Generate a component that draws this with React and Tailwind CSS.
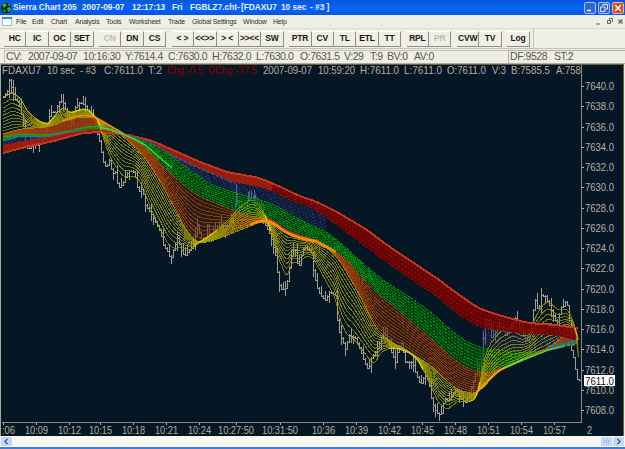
import clsx from 'clsx'

const FONT = "font-['Liberation_Sans',Arial,sans-serif]"

const toolGroups = [
  ['HC', 'IC', 'OC', 'SET'],
  ['CN', 'DN', 'CS'],
  ['< >', '<<>>', '> <', '>><<', 'SW'],
  ['PTR', 'CV', 'TL', 'ETL', 'TT'],
  ['RPL', 'PR'],
  ['CVW', 'TV'],
  ['Log'],
]
const disabledTools = ['CN', 'PR']

const menuItems = [
  ['File', 'w-4'],
  ['Edit', 'w-[19px]'],
  ['Chart', 'w-6'],
  ['Analysis', 'w-[31px]'],
  ['Tools', 'w-[23px]'],
  ['Worksheet', 'w-[39px]'],
  ['Trade', 'w-6'],
  ['Global Settings', 'w-[51px]'],
  ['Window', 'w-[30px]'],
  ['Help', 'w-5'],
]

const titleParts = [
  ['Sierra Chart 205', 'w-[69px]'],
  ['2007-09-07', 'w-[50px]'],
  ['12:17:13', 'w-10'],
  ['Fri', 'w-[18px]'],
  ['FGBLZ7.cht', 'w-[47px]'],
  ['-', 'w-1'],
  ['[FDAXU7', 'w-10'],
  ['10 sec', 'w-[29px]'],
  ['- #3 ]', 'w-6'],
]

const statusParts = [
  ['CV:', 'w-[22px]'],
  ['2007-09-07', 'w-[55px]'],
  ['10:16:30', 'w-[42px]'],
  ['Y:7614.4', 'w-[43px]'],
  ['C:7630.0', 'w-11'],
  ['H:7632.0', 'w-11'],
  ['L:7630.0', 'w-11'],
  ['O:7631.5', 'w-11'],
  ['V:29', 'w-[26px]'],
  ['T:9', 'w-[17px]'],
  ['BV:0', 'w-[27px]'],
  ['AV:0', 'w-[94px]'],
]

// [text, x, width, colour]
const quoteLine = [
  ['FDAXU7', 2, 39],
  ['10 sec', 47, 28],
  ['- #3', 80, 16],
  ['C:7611.0', 104, 39],
  ['T:2', 148, 14],
  ['Chg:-0.5', 167, 36, '#8c0000'],
  ['DChg:-37.5', 208, 49, '#8c0000'],
  ['2007-09-07', 263, 49],
  ['10:59:20', 318, 37],
  ['H:7611.0', 360, 39],
  ['L:7611.0', 404, 38],
  ['O:7611.0', 447, 39],
  ['V:3', 492, 14],
  ['B:7585.5', 511, 39],
]

// [label, tick x, text x, width]
const timeAxis = [
  [':06', 3, 2, 13],
  ['10:09', 36, 25, 23],
  ['10:12', 69, 58, 23],
  ['10:15', 100, 89, 23],
  ['10:18', 133, 122, 23],
  ['10:21', 166, 155, 23],
  ['10:24', 199, 188, 23],
  ['10:27:50', 236, 218, 36],
  ['10:31:50', 280, 262, 36],
  ['10:36', 323, 312, 23],
  ['10:39', 356, 345, 23],
  ['10:42', 389, 378, 23],
  ['10:45', 422, 411, 23],
  ['10:48', 455, 444, 23],
  ['10:51', 488, 477, 23],
  ['10:54', 521, 510, 23],
  ['10:57', 554, 543, 23],
]

const priceAxis = Array.from({ length: 17 }, (_, i) => 7640 - i * 2)

// Moving average envelopes, fast to slow, as x,y pairs
const FAST = [3,98,12,92,20,98,28,112,40,122,48,124,58,112,64,107,70,113,76,111,83,109,90,111,98,120,103,137,110,157,118,170,124,177,134,176,140,181,144,190,150,207,160,228,168,244,175,249,180,247,190,250,198,243,206,238,215,232,228,220,240,207,252,199,258,205,265,214,272,234,278,257,287,278,292,262,300,262,306,256,313,258,320,270,327,283,335,297,340,320,347,335,353,338,360,347,370,360,375,364,380,353,390,348,400,349,410,353,418,360,428,379,438,402,447,410,458,401,468,402,475,399,479,388,484,360,490,344,500,332,513,325,522,332,530,331,535,318,542,306,548,301,558,310,567,309,573,320,578,340]
const YELLOW = [3,134,20,129,48,127,65,121,80,117,95,117,110,127,125,138,140,152,150,165,160,181,175,209,188,233,198,243,210,241,220,238,240,230,260,222,273,224,287,234,313,242,330,250,340,261,350,278,360,296,373,323,380,333,393,343,407,350,420,359,432,366,442,377,458,390,475,394,485,386,495,374,502,369,515,363,530,355,548,348,565,335,578,333]
const ORANGE = [3,137,20,134,48,135,70,131,85,127,100,126,115,131,130,138,145,147,160,163,183,185,200,197,220,205,250,217,270,218,287,231,313,239,333,250,347,260,367,283,380,296,397,309,415,325,435,342,452,358,465,367,478,372,488,373,502,368,515,363,548,350,565,346,578,343]
const GREEN = [3,141,20,136,48,137,70,132,85,130,100,129,118,133,133,136,160,148,187,168,210,184,230,191,250,197,270,203,280,208,300,220,327,232,343,245,367,267,387,283,410,297,432,313,448,328,465,341,482,348,515,352,535,352,548,349,562,344,578,341]
const BLUE = [3,145,30,140,50,136,83,129,100,129,123,134,150,143,180,160,210,173,233,182,260,187,270,190,290,200,313,208,333,222,353,237,373,252,393,267,415,282,435,295,455,312,470,322,482,328,515,333,555,335,578,341]
const RED = [3,153,25,147,50,142,83,133,100,132,123,134,150,140,180,153,200,162,227,172,260,178,283,188,297,195,317,202,337,212,367,230,387,245,415,264,435,277,455,292,478,308,498,315,528,323,555,325,578,328]

const PRICE = [3,97,8,90,9,80,14,98,18,102,22,118,26,148,30,148,34,140,38,146,43,138,48,120,50,112,55,112,58,103,62,100,66,112,70,122,74,108,80,102,84,104,88,112,93,118,98,138,100,144,102,160,106,168,109,160,112,173,115,172,118,188,122,184,126,174,130,170,134,172,138,192,142,188,145,205,150,212,155,222,160,232,163,245,168,252,170,260,173,250,177,238,181,250,184,256,188,250,190,250,194,240,197,225,200,236,204,244,207,225,209,235,213,232,217,226,220,220,222,232,228,225,232,220,234,212,236,195,238,207,245,208,248,198,254,196,258,205,262,213,265,225,270,235,275,255,278,280,280,289,286,288,289,268,292,250,295,250,298,270,302,250,305,247,311,252,313,270,316,285,320,295,325,300,329,292,335,295,337,320,339,332,345,349,349,335,355,338,360,350,364,362,368,370,371,358,376,350,380,340,384,332,388,342,392,355,395,362,398,347,402,342,404,362,408,362,412,362,415,372,420,385,424,375,428,380,431,398,434,408,438,415,441,413,444,398,448,400,452,395,456,388,460,398,465,402,470,390,474,378,477,365,480,372,482,345,485,325,488,318,490,338,495,332,500,325,505,335,510,325,515,318,520,330,525,340,530,330,533,310,535,300,538,312,541,295,545,296,549,305,553,315,557,325,560,308,564,305,566,298,569,320,571,350,574,360,576,378,580,380]

const X0 = 3
const X1 = 578

function at(pts, x) {
  for (let i = 2; i < pts.length; i += 2) {
    if (x <= pts[i]) {
      const t = (x - pts[i - 2]) / (pts[i] - pts[i - 2])
      return pts[i - 1] + (pts[i + 1] - pts[i - 1]) * t
    }
  }
  return pts[pts.length - 1]
}

function sample(pts, radius) {
  const out = []
  for (let x = X0; x <= X1; x++) {
    const r = Math.min(radius, x - X0, X1 - x)
    let sum = 0
    for (let k = -r; k <= r; k++) sum += at(pts, x + k)
    out.push(sum / (2 * r + 1))
  }
  return out
}

const fast = sample(FAST, 2)
const yellow = sample(YELLOW, 5)
const orange = sample(ORANGE, 6)
const green = sample(GREEN, 6)
const blue = sample(BLUE, 6)
const red = sample(RED, 6)

const toPath = (ys) => ys.map((y, i) => `${i ? 'L' : 'M'}${X0 + i} ${y.toFixed(1)}`).join('')

function area(a, b) {
  const back = b.map((y, i) => `L${X0 + i} ${y.toFixed(1)}`).reverse().join('')
  return toPath(a) + back + 'Z'
}

function between(a, b, count, power = 1) {
  return Array.from({ length: count }, (_, k) => {
    const t = Math.pow(k / (count - 1), power)
    return toPath(a.map((y, i) => y + (b[i] - y) * t))
  })
}

// pieces of the fast edge that run close to the slow yellow line
function fastRidge() {
  let d = ''
  let open = false
  fast.forEach((y, i) => {
    const near = Math.abs(y - yellow[i]) < 9
    if (near) d += `${open ? 'L' : 'M'}${X0 + i} ${y.toFixed(1)}`
    open = near
  })
  return d
}

function priceBars() {
  let d = ''
  let seed = 7
  let prev = at(PRICE, X0)
  for (let x = X0; x <= 579; x += 2) {
    seed = (seed * 73 + 41) % 101
    const y = Math.round(at(PRICE, x))
    const up = seed % 3 === 0 ? 7 : 1
    const down = seed % 4 === 1 ? 7 : 1
    const calm = x > 568
    d += `M${x + 0.5} ${Math.min(prev, y) - (calm ? 0 : up)}V${Math.max(prev, y) + (calm ? 0 : down)}M${x} ${y + 0.5}h3`
    prev = y
  }
  return d
}

const Band = ({ from, to, count, power, stroke, opacity = 1, dash }) =>
  between(from, to, count, power).map((d, i) => (
    <path
      key={i}
      d={d}
      fill="none"
      stroke={stroke}
      strokeOpacity={opacity}
      strokeDasharray={dash}
      strokeDashoffset={i * 2}
    />
  ))

const Label = ({ x, y, width, fill = '#b5ada5', children }) => (
  <text x={x} y={y} textLength={width} lengthAdjust="spacingAndGlyphs" fill={fill} fontSize="11">
    {children}
  </text>
)

const Chart = () => (
  <svg viewBox="0 64 625 372" width="625" height="372" className={clsx('block shrink-0', FONT)}>
    <rect x="0" y="64" width="625" height="372" fill="#051724" />
    <path d="M0 64.5H625" stroke="#6b6138" />
    <path d="M0.5 64V436" stroke="#a8a68e" />
    <path d="M623.5 64V436" stroke="#6b6138" />
    <path d="M624.5 64V436" stroke="#ece9d8" />

    <clipPath id="plot">
      <rect x="1" y="64" width="580" height="358" />
    </clipPath>
    <clipPath id="blueZone">
      <rect x="1" y="64" width="325" height="358" />
      <rect x="482" y="64" width="98" height="358" />
    </clipPath>
    <g clipPath="url(#plot)">
      <path d={priceBars()} stroke="#a09d94" fill="none" shapeRendering="crispEdges" />
      <g shapeRendering="crispEdges">
        <path d={area(yellow, orange)} fill="#4a2108" fillOpacity="0.5" />
        <path d={area(orange, green)} fill="#004c08" fillOpacity="0.7" />
        <g clipPath="url(#blueZone)">
          <path d={area(green, blue)} fill="#1a2450" fillOpacity="0.45" />
          <Band from={green} to={blue} count={7} stroke="#30407a" opacity={0.7} dash="2 3 1 2" />
        </g>
        <Band from={orange} to={green} count={9} stroke="#00a010" opacity={0.8} dash="3 1" />
        <Band from={yellow} to={orange} count={12} stroke="#a8410d" opacity={0.75} />
        <Band from={fast} to={yellow} count={11} power={0.8} stroke="#a39c00" opacity={0.75} />
        <path d={area(blue, red)} fill="#780000" fillOpacity="0.88" />
        <path d={area(blue.slice(0, 270), red.slice(0, 270))} fill="#b03018" fillOpacity="0.6" />
        <Band from={blue} to={red} count={5} stroke="#a8200f" opacity={0.55} dash="2 2" />
        <path d={toPath(red)} fill="none" stroke="#c5361c" strokeWidth="2" />
      </g>
      <path d={fastRidge()} fill="none" stroke="#e6e000" strokeWidth="1.4" strokeOpacity="0.8" />
      <path d={toPath(fast.slice(0, 100))} fill="none" stroke="#d8d200" strokeOpacity="0.7" />
      {/* bright ridges where the averages converge */}
      <path d={toPath(orange.slice(0, 120))} fill="none" stroke="#18b038" strokeOpacity="0.8" />
      <path d={toPath(green.slice(0, 85))} fill="none" stroke="#2878a8" />
      <path d="M62 121Q85 112 97 118L124 134" fill="none" stroke="#f08a18" strokeWidth="1.5" />
      <path d="M100 127Q125 133 145 145L172 168" fill="none" stroke="#40d840" strokeWidth="1.5" />
      <path d="M130 135Q150 140 175 157L235 184" fill="none" stroke="#2060a0" strokeWidth="1.5" strokeDasharray="3 2" />
      <path
        d="M250 225Q265 217 276 225Q290 238 316 241L336 252"
        fill="none"
        stroke="#ff8a10"
        strokeWidth="2.5"
      />
      <path d="M476 393Q490 378 500 370L522 360" fill="none" stroke="#f0a020" strokeWidth="2" />
      <path d="M505 367L548 350L565 346" fill="none" stroke="#48e048" strokeWidth="1.6" />
      <path d="M548 347L578 341" stroke="#1878b8" strokeWidth="4" strokeDasharray="2 2" />
      <path d="M562 346L578 344" stroke="#20b840" strokeWidth="2" strokeDasharray="3 2" />
      <path d="M236.500 184V207M248.500 192V202M254.500 190V204" stroke="#2878a8" />
      <path d="M576.500 338L578.500 357" stroke="#a39c00" />
    </g>

    {quoteLine.map(([text, x, width, fill]) => (
      <Label key={x} x={x} y={74} width={width} fill={fill}>{text}</Label>
    ))}
    <g clipPath="url(#plot)">
      <Label x={556} y={74} width={38}>A:7586.0</Label>
    </g>

    <path d="M581.5 65V422M2 422.5H582" stroke="#8d8880" fill="none" />
    {priceAxis.map((price, i) => (
      <g key={price}>
        <path d={`M582 ${Math.round(86 + i * 20.25)}.5h2`} stroke="#b5ada5" />
        <Label x={585} y={90 + i * 20.25} width={29}>{price.toFixed(1)}</Label>
      </g>
    ))}
    <rect x="584" y="375" width="31" height="11" fill="#fff" />
    <Label x={585} y={384.5} width={29} fill="#101010">7611.0</Label>

    {timeAxis.map(([label, tick, x, width]) => (
      <g key={tick}>
        <path d={`M${tick}.5 423v2`} stroke="#b5ada5" />
        <Label x={x} y={434} width={width}>{label}</Label>
      </g>
    ))}
    <Label x={587} y={434} width={5}>2</Label>
  </svg>
)

const TitleBar = () => (
  <div className="flex h-[15px] shrink-0 items-center bg-linear-to-b from-[#0a55dc] via-[#0563f5] to-[#0558e4] pr-px">
    <svg width="13" height="13" viewBox="0 0 13 13" className="shrink-0">
      <circle cx="6" cy="7" r="5.2" fill="#06280e" />
      <path d="M2 4l3-2 2 2-3 3zM7 7l3-1 1 3-3 2zM3 8l2 1 1 2H4z" fill="#28b838" />
      <path d="M8 3l2 1-1 1z" fill="#b8e0c0" />
    </svg>
    <div className="flex flex-1 whitespace-nowrap text-[8.3px] leading-none font-bold text-[#e8f0ff]">
      {titleParts.map(([text, width]) => (
        <span key={text} className={clsx('shrink-0', width)}>{text}</span>
      ))}
    </div>
    <div className="flex gap-[2px]">
      <svg width="12" height="12" viewBox="0 0 12 12">
        <rect x="0.5" y="0.5" width="11" height="11" rx="1.5" fill="#2f66dd" stroke="#a8c4f4" />
        <path d="M3 8.5h4" stroke="#fff" strokeWidth="1.5" />
      </svg>
      <svg width="12" height="12" viewBox="0 0 12 12">
        <rect x="0.5" y="0.5" width="11" height="11" rx="1.5" fill="#2f66dd" stroke="#a8c4f4" />
        <path d="M5 4V2.5h4.5V7H8M2.5 5h4.5v4.5H2.5z" fill="none" stroke="#dce8ff" />
      </svg>
      <svg width="12" height="12" viewBox="0 0 12 12">
        <rect x="0.5" y="0.5" width="11" height="11" rx="1.5" fill="#d84a20" stroke="#f0b8a8" />
        <path d="M3 3l6 6M9 3L3 9" stroke="#fff" strokeWidth="1.6" />
      </svg>
    </div>
  </div>
)

const MenuBar = () => (
  <div className="flex h-[13px] shrink-0 items-center bg-[#f0efe5] pl-0.5">
    <svg width="14" height="10" viewBox="0 0 14 10" className="shrink-0">
      <rect x="0.5" y="0.5" width="9" height="8" fill="#fff" stroke="#9cb8e8" />
      <path d="M0 1h10" stroke="#4080e0" strokeWidth="2" />
    </svg>
    <div className="flex flex-1 whitespace-nowrap text-[7px] leading-none tracking-[-0.2px] text-[#303030]">
      {menuItems.map(([text, width]) => (
        <span key={text} className={clsx('shrink-0', width)}>{text}</span>
      ))}
    </div>
    <svg width="31" height="9" viewBox="0 0 31 9" fill="none" stroke="#606060">
      <path d="M2 7h4M15.5 3.5v-2h3v3h-1M13.5 3.5h3v3h-3z" />
      <path d="M24.5 2.5l4 4M28.5 2.5l-4 4" strokeWidth="1.2" />
    </svg>
  </div>
)

const ToolBar = () => (
  <div className="flex h-[21px] shrink-0 items-center border-t border-b border-t-[#dcdacb] border-b-[#c4c2b4] bg-[#f0efe5] pl-1">
    <div className="flex h-full items-center gap-[5.5px] border-r border-[#c4c2b4] pr-[3px]">
      {toolGroups.map((group) => (
        <div key={group[0]} className="flex">
          {group.map((tool) => (
            <button
              key={tool}
              className={clsx(
                'flex h-[16px] w-[22.4px] items-center justify-center overflow-hidden border-t border-r border-b border-t-white border-r-[#8f8d80] border-b-[#8f8d80] text-[8.5px] leading-none font-bold tracking-[-0.2px] whitespace-nowrap',
                disabledTools.includes(tool) ? 'text-[#bcbab0]' : 'text-[#181818]'
              )}
            >
              {tool}
            </button>
          ))}
        </div>
      ))}
    </div>
  </div>
)

const StatusBar = () => (
  <div className="flex h-[15px] shrink-0 items-center border-b border-[#b0ae9f] bg-[#efeee4] pl-1 text-[10.5px] leading-none tracking-[-0.45px] whitespace-nowrap text-[#58564c]">
    <div className="flex h-[13px] items-center border-t border-l border-[#c4c2b4] pl-px">
      {statusParts.map(([text, width]) => (
        <span key={text} className={clsx('shrink-0', width)}>{text}</span>
      ))}
    </div>
    <div className="flex h-[13px] flex-1 items-center border-t border-l border-[#b0ae9f] pl-px">
      <span className="w-11">DF:9528</span>
      <span>ST:2</span>
    </div>
  </div>
)

const ScrollButton = ({ d }) => (
  <svg width="11" height="9" viewBox="0 0 11 9" className="shrink-0">
    <rect width="11" height="9" rx="1.5" fill="#c3d5f8" />
    <path d={d} fill="none" stroke="#38589c" strokeWidth="1.4" />
  </svg>
)

const ScrollBar = () => (
  <div className="flex h-[11px] shrink-0 items-center bg-[#f8f7f0] px-px">
    <ScrollButton d="M6.5 2L4 4.5L6.5 7" />
    <div className="flex-1" />
    <svg width="11" height="9" viewBox="0 0 11 9" className="shrink-0">
      <rect width="11" height="9" rx="1.5" fill="#c3d5f8" />
      <path d="M3.5 3v3M5.5 3v3M7.5 3v3" stroke="#9ab4e8" />
    </svg>
    <div className="w-px" />
    <ScrollButton d="M4.5 2L7 4.5L4.500 7" />
  </div>
)

const App = () => (
  <div className={clsx('flex h-[449px] w-[625px] flex-col overflow-hidden bg-[#3a7ee0]', FONT)}>
    <TitleBar />
    <MenuBar />
    <ToolBar />
    <StatusBar />
    <Chart />
    <ScrollBar />
  </div>
)

export default App
